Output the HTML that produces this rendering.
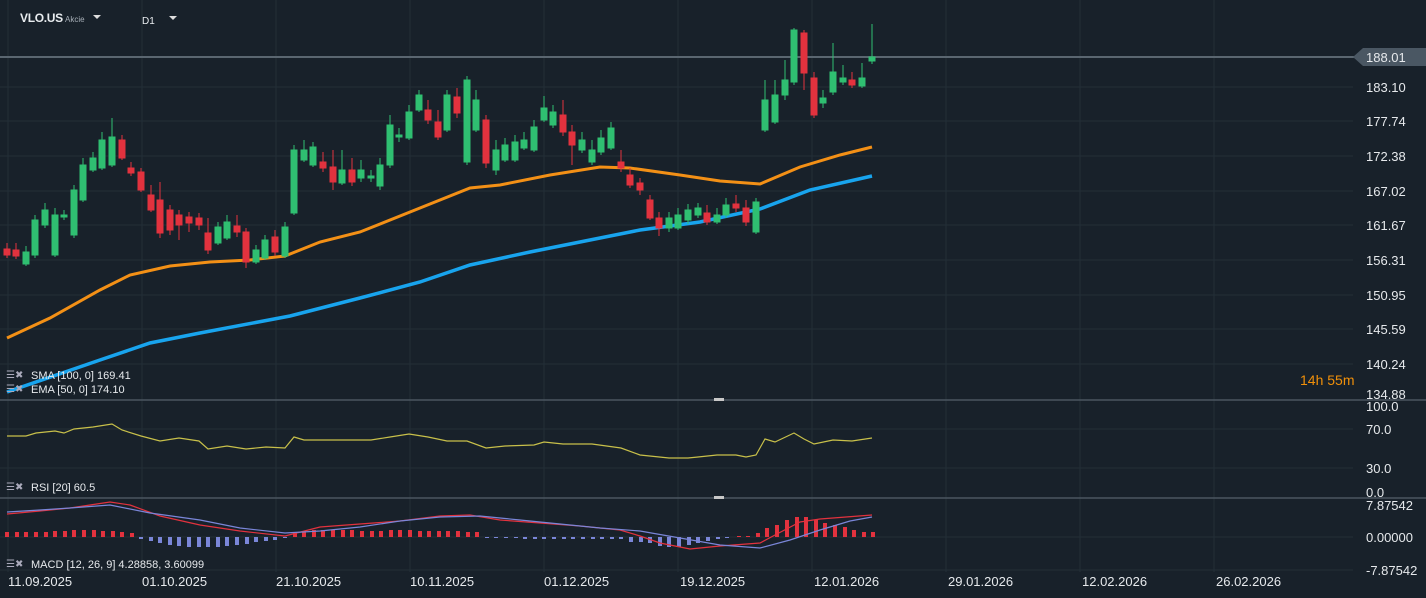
<!DOCTYPE html>
<html><head><meta charset="utf-8"><style>
html,body{margin:0;padding:0;background:#18212a;width:1426px;height:598px;overflow:hidden}
svg{display:block;font-family:"Liberation Sans",sans-serif}
</style></head><body>
<svg width="1426" height="598" viewBox="0 0 1426 598">
<rect width="1426" height="598" fill="#18212a"/>
<g stroke="#232e37" stroke-width="1">
<line x1="8" y1="0" x2="8" y2="572"/><line x1="142" y1="0" x2="142" y2="572"/><line x1="276" y1="0" x2="276" y2="572"/><line x1="410" y1="0" x2="410" y2="572"/><line x1="544" y1="0" x2="544" y2="572"/><line x1="678" y1="0" x2="678" y2="572"/><line x1="812" y1="0" x2="812" y2="572"/><line x1="946" y1="0" x2="946" y2="572"/><line x1="1080" y1="0" x2="1080" y2="572"/><line x1="1214" y1="0" x2="1214" y2="572"/>
<line x1="0" y1="87" x2="1353" y2="87"/><line x1="0" y1="121" x2="1353" y2="121"/><line x1="0" y1="156" x2="1353" y2="156"/><line x1="0" y1="191" x2="1353" y2="191"/><line x1="0" y1="225" x2="1353" y2="225"/><line x1="0" y1="260" x2="1353" y2="260"/><line x1="0" y1="295" x2="1353" y2="295"/><line x1="0" y1="329" x2="1353" y2="329"/><line x1="0" y1="364" x2="1353" y2="364"/>
<line x1="0" y1="429" x2="1353" y2="429"/><line x1="0" y1="468" x2="1353" y2="468"/>
<line x1="0" y1="537" x2="1353" y2="537"/><line x1="0" y1="570" x2="1353" y2="570"/>
</g>
<line x1="0" y1="400" x2="1426" y2="400" stroke="#4a5660" stroke-width="1.5"/>
<line x1="0" y1="498" x2="1426" y2="498" stroke="#4a5660" stroke-width="1.5"/>
<rect x="714" y="398" width="10" height="3" fill="#c8c8c8"/>
<rect x="714" y="496" width="10" height="3" fill="#c8c8c8"/>
<line x1="0" y1="57" x2="1355" y2="57" stroke="#5a6670" stroke-width="2"/>
<!-- header -->
<text x="20" y="22" fill="#e8ecef" font-size="12" font-weight="bold" letter-spacing="-0.3">VLO.US</text>
<text x="65" y="22" fill="#a8b0b8" font-size="8">Akcie</text>
<path d="M93 15h8l-4 4z" fill="#ddd"/>
<text x="142" y="24" fill="#e8ecef" font-size="10">D1</text>
<path d="M169 16h8l-4 4z" fill="#ddd"/>
<!-- price tag -->
<path d="M1353 57l10-9h63v18h-63z" fill="#4a5763"/>
<g fill="#e6e9ec" font-size="13">
<text x="1366" y="62">188.01</text><text x="1366" y="92">183.10</text><text x="1366" y="126">177.74</text><text x="1366" y="161">172.38</text><text x="1366" y="196">167.02</text><text x="1366" y="230">161.67</text><text x="1366" y="265">156.31</text><text x="1366" y="300">150.95</text><text x="1366" y="334">145.59</text><text x="1366" y="369">140.24</text><text x="1366" y="399">134.88</text>
<text x="1366" y="411">100.0</text><text x="1366" y="434">70.0</text><text x="1366" y="473">30.0</text><text x="1366" y="497">0.0</text>
<text x="1366" y="510">7.87542</text><text x="1366" y="542">0.00000</text><text x="1366" y="575">-7.87542</text>
</g>
<text x="1300" y="385" font-size="14" fill="#f0900a">14h 55m</text>
<!-- dates -->
<g fill="#e6e9ec" font-size="13">
<text x="8" y="586">11.09.2025</text><text x="142" y="586">01.10.2025</text><text x="276" y="586">21.10.2025</text><text x="410" y="586">10.11.2025</text><text x="544" y="586">01.12.2025</text><text x="680" y="586">19.12.2025</text><text x="814" y="586">12.01.2026</text><text x="948" y="586">29.01.2026</text><text x="1082" y="586">12.02.2026</text><text x="1216" y="586">26.02.2026</text>
</g>
<!-- moving averages -->
<polyline fill="none" stroke="#f39016" stroke-width="3" points="7,338 50,318 100,290 130,275 170,266 210,262 250,260 285,256 320,242 360,232 420,208 470,188 500,185 550,175 600,167 630,168 680,175 720,181 760,184 800,167 840,155 872,147"/>
<polyline fill="none" stroke="#18a4ee" stroke-width="3.5" points="7,392 100,360 150,343 200,333 290,316 360,298 420,282 470,265 530,252 580,242 640,230 700,222 760,209 810,190 872,176"/>
<!-- candles -->
<g stroke-width="1">
<g fill="#2fbf71" stroke="#2fbf71">
<line x1="26" y1="246" x2="26" y2="266"/><rect x="23" y="252" width="6" height="12"/>
<line x1="35" y1="215" x2="35" y2="258"/><rect x="32" y="220" width="6" height="35"/>
<line x1="45" y1="203" x2="45" y2="228"/><rect x="42" y="210" width="6" height="15"/>
<line x1="55" y1="208" x2="55" y2="257"/><rect x="52" y="215" width="6" height="40"/>
<line x1="64" y1="210" x2="64" y2="220"/><rect x="61" y="215" width="6" height="2"/>
<line x1="74" y1="185" x2="74" y2="238"/><rect x="71" y="190" width="6" height="45"/>
<line x1="83" y1="158" x2="83" y2="202"/><rect x="80" y="165" width="6" height="35"/>
<line x1="93" y1="152" x2="93" y2="172"/><rect x="90" y="158" width="6" height="12"/>
<line x1="102" y1="132" x2="102" y2="170"/><rect x="99" y="140" width="6" height="28"/>
<line x1="112" y1="118" x2="112" y2="167"/><rect x="109" y="137" width="6" height="28"/>
<line x1="218" y1="222" x2="218" y2="245"/><rect x="215" y="227" width="6" height="16"/>
<line x1="227" y1="215" x2="227" y2="240"/><rect x="224" y="222" width="6" height="16"/>
<line x1="256" y1="245" x2="256" y2="264"/><rect x="253" y="250" width="6" height="12"/>
<line x1="265" y1="235" x2="265" y2="260"/><rect x="262" y="240" width="6" height="18"/>
<line x1="285" y1="222" x2="285" y2="258"/><rect x="282" y="227" width="6" height="29"/>
<line x1="294" y1="145" x2="294" y2="215"/><rect x="291" y="150" width="6" height="63"/>
<line x1="304" y1="140" x2="304" y2="162"/><rect x="301" y="150" width="6" height="10"/>
<line x1="313" y1="142" x2="313" y2="167"/><rect x="310" y="147" width="6" height="18"/>
<line x1="342" y1="150" x2="342" y2="185"/><rect x="339" y="170" width="6" height="13"/>
<line x1="361" y1="160" x2="361" y2="182"/><rect x="358" y="170" width="6" height="8"/>
<line x1="371" y1="170" x2="371" y2="182"/><rect x="368" y="176" width="6" height="2"/>
<line x1="380" y1="158" x2="380" y2="190"/><rect x="377" y="165" width="6" height="21"/>
<line x1="390" y1="115" x2="390" y2="168"/><rect x="387" y="125" width="6" height="40"/>
<line x1="399" y1="128" x2="399" y2="142"/><rect x="396" y="135" width="6" height="2"/>
<line x1="409" y1="105" x2="409" y2="140"/><rect x="406" y="112" width="6" height="26"/>
<line x1="419" y1="90" x2="419" y2="112"/><rect x="416" y="95" width="6" height="15"/>
<line x1="447" y1="90" x2="447" y2="132"/><rect x="444" y="95" width="6" height="35"/>
<line x1="467" y1="76" x2="467" y2="165"/><rect x="464" y="80" width="6" height="82"/>
<line x1="476" y1="90" x2="476" y2="132"/><rect x="473" y="100" width="6" height="30"/>
<line x1="496" y1="140" x2="496" y2="175"/><rect x="493" y="150" width="6" height="20"/>
<line x1="505" y1="138" x2="505" y2="162"/><rect x="502" y="145" width="6" height="15"/>
<line x1="515" y1="135" x2="515" y2="162"/><rect x="512" y="142" width="6" height="18"/>
<line x1="524" y1="132" x2="524" y2="150"/><rect x="521" y="140" width="6" height="8"/>
<line x1="534" y1="120" x2="534" y2="152"/><rect x="531" y="127" width="6" height="23"/>
<line x1="544" y1="96" x2="544" y2="122"/><rect x="541" y="108" width="6" height="12"/>
<line x1="553" y1="105" x2="553" y2="128"/><rect x="550" y="112" width="6" height="13"/>
<line x1="582" y1="132" x2="582" y2="153"/><rect x="579" y="140" width="6" height="10"/>
<line x1="592" y1="140" x2="592" y2="165"/><rect x="589" y="150" width="6" height="12"/>
<line x1="601" y1="130" x2="601" y2="155"/><rect x="598" y="138" width="6" height="14"/>
<line x1="611" y1="122" x2="611" y2="150"/><rect x="608" y="128" width="6" height="20"/>
<line x1="669" y1="212" x2="669" y2="232"/><rect x="666" y="218" width="6" height="10"/>
<line x1="678" y1="208" x2="678" y2="230"/><rect x="675" y="215" width="6" height="13"/>
<line x1="688" y1="204" x2="688" y2="224"/><rect x="685" y="210" width="6" height="10"/>
<line x1="698" y1="203" x2="698" y2="218"/><rect x="695" y="208" width="6" height="7"/>
<line x1="717" y1="208" x2="717" y2="224"/><rect x="714" y="215" width="6" height="7"/>
<line x1="726" y1="198" x2="726" y2="218"/><rect x="723" y="205" width="6" height="10"/>
<line x1="756" y1="198" x2="756" y2="234"/><rect x="753" y="202" width="6" height="30"/>
<line x1="765" y1="80" x2="765" y2="132"/><rect x="762" y="100" width="6" height="30"/>
<line x1="775" y1="80" x2="775" y2="124"/><rect x="772" y="95" width="6" height="27"/>
<line x1="785" y1="60" x2="785" y2="100"/><rect x="782" y="80" width="6" height="15"/>
<line x1="794" y1="28" x2="794" y2="85"/><rect x="791" y="30" width="6" height="52"/>
<line x1="823" y1="90" x2="823" y2="108"/><rect x="820" y="98" width="6" height="5"/>
<line x1="833" y1="43" x2="833" y2="95"/><rect x="830" y="72" width="6" height="20"/>
<line x1="843" y1="65" x2="843" y2="85"/><rect x="840" y="78" width="6" height="4"/>
<line x1="862" y1="63" x2="862" y2="88"/><rect x="859" y="78" width="6" height="8"/>
<line x1="872" y1="24" x2="872" y2="64"/><rect x="869" y="57" width="6" height="4"/>
</g>
<g fill="#e2323e" stroke="#e2323e">
<line x1="7" y1="243" x2="7" y2="258"/><rect x="4" y="249" width="6" height="6"/>
<line x1="16" y1="243" x2="16" y2="259"/><rect x="13" y="250" width="6" height="6"/>
<line x1="122" y1="135" x2="122" y2="160"/><rect x="119" y="140" width="6" height="18"/>
<line x1="131" y1="162" x2="131" y2="176"/><rect x="128" y="168" width="6" height="5"/>
<line x1="141" y1="168" x2="141" y2="192"/><rect x="138" y="172" width="6" height="18"/>
<line x1="151" y1="185" x2="151" y2="212"/><rect x="148" y="195" width="6" height="15"/>
<line x1="160" y1="182" x2="160" y2="238"/><rect x="157" y="200" width="6" height="33"/>
<line x1="170" y1="205" x2="170" y2="235"/><rect x="167" y="210" width="6" height="20"/>
<line x1="179" y1="210" x2="179" y2="240"/><rect x="176" y="215" width="6" height="10"/>
<line x1="189" y1="212" x2="189" y2="232"/><rect x="186" y="217" width="6" height="6"/>
<line x1="199" y1="213" x2="199" y2="230"/><rect x="196" y="218" width="6" height="7"/>
<line x1="208" y1="218" x2="208" y2="254"/><rect x="205" y="233" width="6" height="17"/>
<line x1="237" y1="215" x2="237" y2="237"/><rect x="234" y="226" width="6" height="6"/>
<line x1="246" y1="228" x2="246" y2="268"/><rect x="243" y="232" width="6" height="30"/>
<line x1="275" y1="230" x2="275" y2="256"/><rect x="272" y="237" width="6" height="15"/>
<line x1="323" y1="152" x2="323" y2="172"/><rect x="320" y="162" width="6" height="6"/>
<line x1="333" y1="150" x2="333" y2="190"/><rect x="330" y="167" width="6" height="15"/>
<line x1="352" y1="158" x2="352" y2="186"/><rect x="349" y="170" width="6" height="12"/>
<line x1="428" y1="100" x2="428" y2="124"/><rect x="425" y="110" width="6" height="10"/>
<line x1="438" y1="110" x2="438" y2="140"/><rect x="435" y="122" width="6" height="15"/>
<line x1="457" y1="88" x2="457" y2="118"/><rect x="454" y="97" width="6" height="16"/>
<line x1="486" y1="115" x2="486" y2="168"/><rect x="483" y="120" width="6" height="43"/>
<line x1="563" y1="100" x2="563" y2="136"/><rect x="560" y="115" width="6" height="17"/>
<line x1="572" y1="125" x2="572" y2="165"/><rect x="569" y="132" width="6" height="13"/>
<line x1="621" y1="150" x2="621" y2="172"/><rect x="618" y="162" width="6" height="6"/>
<line x1="630" y1="168" x2="630" y2="188"/><rect x="627" y="175" width="6" height="10"/>
<line x1="640" y1="178" x2="640" y2="195"/><rect x="637" y="183" width="6" height="7"/>
<line x1="650" y1="195" x2="650" y2="220"/><rect x="647" y="200" width="6" height="18"/>
<line x1="659" y1="212" x2="659" y2="236"/><rect x="656" y="218" width="6" height="10"/>
<line x1="707" y1="205" x2="707" y2="225"/><rect x="704" y="213" width="6" height="9"/>
<line x1="736" y1="195" x2="736" y2="212"/><rect x="733" y="204" width="6" height="4"/>
<line x1="746" y1="200" x2="746" y2="226"/><rect x="743" y="208" width="6" height="14"/>
<line x1="804" y1="30" x2="804" y2="90"/><rect x="801" y="33" width="6" height="40"/>
<line x1="814" y1="72" x2="814" y2="118"/><rect x="811" y="78" width="6" height="37"/>
<line x1="852" y1="72" x2="852" y2="88"/><rect x="849" y="80" width="6" height="5"/>
</g>
</g>
<!-- legends -->
<g font-size="11" fill="#e6e9ec">
<text x="6" y="378" fill="#aab" font-size="10">☰✖</text><text x="31" y="379">SMA [100, 0] 169.41</text>
<text x="6" y="392" fill="#aab" font-size="10">☰✖</text><text x="31" y="393">EMA [50, 0] 174.10</text>
<text x="6" y="490" fill="#aab" font-size="10">☰✖</text><text x="31" y="491">RSI [20] 60.5</text>
<text x="6" y="567" fill="#aab" font-size="10">☰✖</text><text x="31" y="568">MACD [12, 26, 9] 4.28858, 3.60099</text>
</g>
<!-- RSI -->
<polyline fill="none" stroke="#c8c04a" stroke-width="1.2" points="7,436 26,436 36,433 55,431 64,433 74,429 93,427 112,424 122,430 141,436 160,441 179,438 199,441 208,449 227,446 246,449 266,447 285,448 294,437 304,440 323,440 352,440 371,440 390,437 409,434 428,437 447,441 467,441 486,448 505,446 534,445 544,442 563,444 592,444 621,448 640,455 669,458 688,458 698,457 717,455 736,455 746,457 756,455 765,439 775,442 794,433 804,439 814,444 833,440 852,441 872,438"/>
<!-- MACD histogram -->
<g fill="#e2323e">
<rect x="5" y="532" width="4" height="5"/><rect x="15" y="532" width="4" height="5"/><rect x="24" y="532" width="4" height="5"/><rect x="34" y="532" width="4" height="5"/><rect x="44" y="532" width="4" height="5"/><rect x="53" y="531" width="4" height="6"/><rect x="63" y="531" width="4" height="6"/><rect x="72" y="530" width="4" height="7"/><rect x="82" y="530" width="4" height="7"/><rect x="92" y="530" width="4" height="7"/><rect x="101" y="531" width="4" height="6"/><rect x="111" y="531" width="4" height="6"/><rect x="120" y="532" width="4" height="5"/><rect x="130" y="533" width="4" height="4"/>
<rect x="293" y="533" width="4" height="4"/><rect x="302" y="531" width="4" height="6"/><rect x="312" y="530" width="4" height="7"/><rect x="321" y="530" width="4" height="7"/><rect x="331" y="530" width="4" height="7"/><rect x="341" y="530" width="4" height="7"/><rect x="350" y="530" width="4" height="7"/><rect x="360" y="531" width="4" height="6"/><rect x="370" y="531" width="4" height="6"/><rect x="379" y="531" width="4" height="6"/><rect x="389" y="530" width="4" height="7"/><rect x="398" y="530" width="4" height="7"/><rect x="408" y="530" width="4" height="7"/><rect x="418" y="531" width="4" height="6"/><rect x="427" y="531" width="4" height="6"/><rect x="437" y="531" width="4" height="6"/><rect x="446" y="531" width="4" height="6"/><rect x="456" y="531" width="4" height="6"/><rect x="466" y="532" width="4" height="5"/><rect x="475" y="532" width="4" height="5"/>
<rect x="737" y="536" width="4" height="1"/><rect x="746" y="536" width="4" height="1"/><rect x="756" y="533" width="4" height="4"/><rect x="765" y="528" width="4" height="9"/><rect x="775" y="525" width="4" height="12"/><rect x="785" y="520" width="4" height="17"/><rect x="795" y="517" width="4" height="20"/><rect x="804" y="517" width="4" height="20"/><rect x="814" y="520" width="4" height="17"/><rect x="823" y="523" width="4" height="14"/><rect x="833" y="525" width="4" height="12"/><rect x="843" y="527" width="4" height="10"/><rect x="852" y="530" width="4" height="7"/><rect x="862" y="532" width="4" height="5"/><rect x="871" y="532" width="4" height="5"/>
</g>
<g fill="#7a86d8">
<rect x="139" y="537" width="4" height="2"/><rect x="149" y="537" width="4" height="4"/><rect x="158" y="537" width="4" height="6"/><rect x="168" y="537" width="4" height="8"/><rect x="177" y="537" width="4" height="9"/><rect x="187" y="537" width="4" height="10"/><rect x="197" y="537" width="4" height="10"/><rect x="206" y="537" width="4" height="10"/><rect x="216" y="537" width="4" height="10"/><rect x="225" y="537" width="4" height="9"/><rect x="235" y="537" width="4" height="8"/><rect x="245" y="537" width="4" height="7"/><rect x="254" y="537" width="4" height="5"/><rect x="264" y="537" width="4" height="4"/><rect x="273" y="537" width="4" height="3"/><rect x="283" y="537" width="4" height="1"/>
<rect x="485" y="537" width="4" height="1"/><rect x="494" y="537" width="4" height="1"/><rect x="504" y="537" width="4" height="1"/><rect x="514" y="537" width="4" height="1"/><rect x="523" y="537" width="4" height="2"/><rect x="533" y="537" width="4" height="2"/><rect x="542" y="537" width="4" height="2"/><rect x="552" y="537" width="4" height="2"/><rect x="562" y="537" width="4" height="2"/><rect x="571" y="537" width="4" height="2"/><rect x="581" y="537" width="4" height="2"/><rect x="591" y="537" width="4" height="2"/><rect x="600" y="537" width="4" height="2"/><rect x="610" y="537" width="4" height="2"/><rect x="619" y="537" width="4" height="2"/><rect x="629" y="537" width="4" height="5"/><rect x="639" y="537" width="4" height="5"/><rect x="648" y="537" width="4" height="6"/><rect x="658" y="537" width="4" height="9"/><rect x="667" y="537" width="4" height="10"/><rect x="677" y="537" width="4" height="10"/><rect x="687" y="537" width="4" height="8"/><rect x="696" y="537" width="4" height="6"/><rect x="706" y="537" width="4" height="4"/><rect x="716" y="537" width="4" height="2"/><rect x="725" y="537" width="4" height="1"/>
</g>
<polyline fill="none" stroke="#e2323e" stroke-width="1.2" points="7,514 40,511 70,508 110,502 130,505 160,516 200,525 240,531 285,536 320,527 360,524 400,521 440,516 470,515 500,520 540,523 580,526 620,530 640,536 660,543 690,549 720,546 760,543 775,535 800,522 820,519 872,515"/>
<polyline fill="none" stroke="#7a86d8" stroke-width="1.2" points="7,512 40,510 70,508 110,505 150,513 200,520 240,528 285,533 320,531 360,527 400,521 440,517 480,516 520,520 560,524 600,528 640,531 680,538 720,545 760,548 790,540 820,530 850,521 872,517"/>
</svg>
</body></html>
